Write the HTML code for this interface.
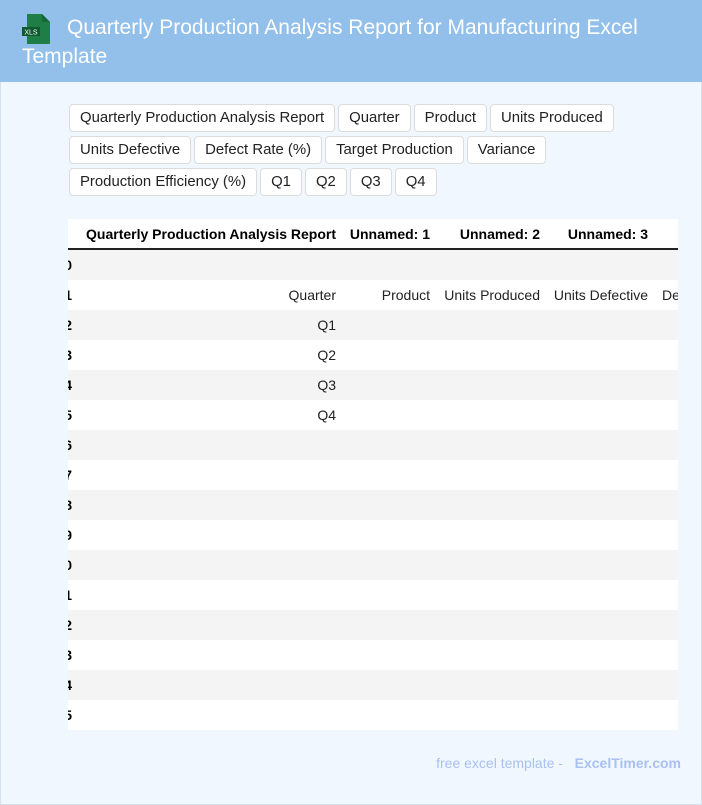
<!DOCTYPE html>
<html><head><meta charset="utf-8"><style>
*{margin:0;padding:0;box-sizing:border-box}
body{width:702px;height:805px;background:#f0f7ff;font-family:"Liberation Sans",Arial,sans-serif;position:relative;overflow:hidden;border:1px solid #d4e2f0}
.hdr{position:absolute;left:-1px;top:-1px;width:702px;height:82px;background:#92c0eb}
.title{position:absolute;left:22px;top:13px;width:640px;color:#fff;font-size:21px;line-height:29px;text-indent:45px}
.chips{position:absolute;left:68px;top:103px;width:560px;display:flex;flex-wrap:wrap;gap:4px 3px}
.chip{height:28px;border:1px solid #dcdcdc;border-radius:4px;background:#fff;font-size:14.9px;line-height:26px;padding:0 10px;color:#222}
.tbl{position:absolute;left:67px;top:218px;width:610px;height:511px;overflow:hidden;background:#fff}
.row{position:absolute;left:0;width:610px;height:30px;font-size:14px;line-height:30px;color:#222}
.g{background:#f4f4f4}
.c{position:absolute;white-space:nowrap;text-align:right}
.b{font-weight:bold;color:#000}
.foot{position:absolute;right:20px;top:754px;font-size:14px;color:#a9c0f0}
</style></head><body>
<div class="hdr">
<svg style="position:absolute;left:21px;top:13px" width="32" height="32" viewBox="0 0 32 32"><path d="M6 1h15l8 8v21a1 1 0 0 1-1 1H6z" fill="#1e7e45"/><path d="M21 1v8h8z" fill="#15683a"/><rect x="1" y="14" width="18" height="9" fill="#0f5a2f"/><text x="10" y="21.5" font-size="7" fill="#fff" text-anchor="middle" font-family="Liberation Sans">XLS</text></svg>
<div class="title">Quarterly Production Analysis Report for Manufacturing Excel Template</div>
</div>
<div class="chips">
<span class="chip">Quarterly Production Analysis Report</span><span class="chip">Quarter</span><span class="chip">Product</span><span class="chip">Units Produced</span>
<span class="chip">Units Defective</span><span class="chip">Defect Rate (%)</span><span class="chip">Target Production</span><span class="chip">Variance</span>
<span class="chip">Production Efficiency (%)</span><span class="chip">Q1</span><span class="chip">Q2</span><span class="chip">Q3</span><span class="chip">Q4</span>
</div>
<div class="tbl">
<div class="row b" style="top:0;height:31px;border-bottom:2px solid #222;line-height:30px">
<span class="c" style="right:342px">Quarterly Production Analysis Report</span>
<span class="c" style="right:248px">Unnamed: 1</span>
<span class="c" style="right:138px">Unnamed: 2</span>
<span class="c" style="right:30px">Unnamed: 3</span>
</div>
<div class="row g" style="top:31px"><span class="c b" style="right:606px">0</span></div>
<div class="row" style="top:61px"><span class="c b" style="right:606px">1</span><span class="c" style="right:342px">Quarter</span><span class="c" style="right:248px">Product</span><span class="c" style="right:138px">Units Produced</span><span class="c" style="right:30px">Units Defective</span><span class="c" style="left:594px;text-align:left">Defect Rate (%)</span></div>
<div class="row g" style="top:91px"><span class="c b" style="right:606px">2</span><span class="c" style="right:342px">Q1</span></div>
<div class="row" style="top:121px"><span class="c b" style="right:606px">3</span><span class="c" style="right:342px">Q2</span></div>
<div class="row g" style="top:151px"><span class="c b" style="right:606px">4</span><span class="c" style="right:342px">Q3</span></div>
<div class="row" style="top:181px"><span class="c b" style="right:606px">5</span><span class="c" style="right:342px">Q4</span></div>
<div class="row g" style="top:211px"><span class="c b" style="right:606px">6</span></div>
<div class="row" style="top:241px"><span class="c b" style="right:606px">7</span></div>
<div class="row g" style="top:271px"><span class="c b" style="right:606px">8</span></div>
<div class="row" style="top:301px"><span class="c b" style="right:606px">9</span></div>
<div class="row g" style="top:331px"><span class="c b" style="right:606px">10</span></div>
<div class="row" style="top:361px"><span class="c b" style="right:606px">11</span></div>
<div class="row g" style="top:391px"><span class="c b" style="right:606px">12</span></div>
<div class="row" style="top:421px"><span class="c b" style="right:606px">13</span></div>
<div class="row g" style="top:451px"><span class="c b" style="right:606px">14</span></div>
<div class="row" style="top:481px"><span class="c b" style="right:606px">15</span></div>
</div>
<div class="foot">free excel template - &nbsp; <b>ExcelTimer.com</b></div>
</body></html>
